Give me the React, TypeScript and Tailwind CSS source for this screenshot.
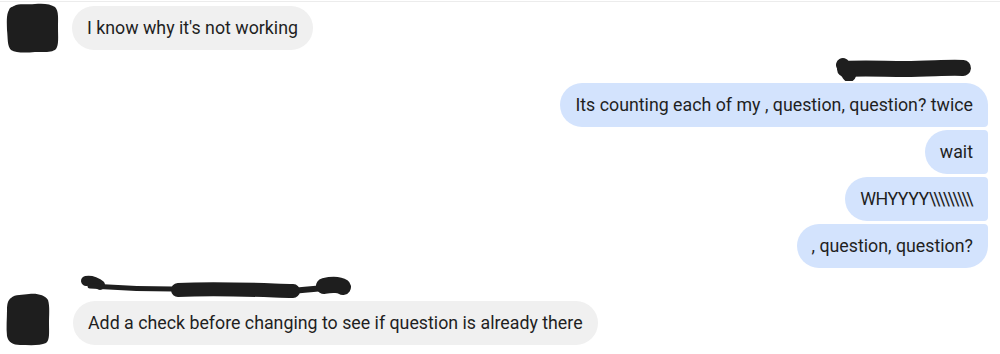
import React from "react";

const ink = "#1e1e1e";

const Bubble = ({ children, side, shape }: { children: React.ReactNode; side: "in" | "out"; shape: string }) => {
  const color = side === "in" ? "bg-[#f0f0f0]" : "bg-[#d3e3fd]";
  return (
    <div className={`h-[44px] flex items-center px-[15px] text-[17.8px] text-[#1f1f1f] whitespace-nowrap ${color} ${shape}`}>
      {children}
    </div>
  );
};

const AvatarTop = () => (
  <svg width="54" height="50" viewBox="0 0 54 50" className="shrink-0">
    <path
      d="M9,3 C14,0 22,2 30,1 C38,0 46,1 50,4 C54,8 53,16 53,25 C53,34 54,42 51,46 C47,50 38,49 30,49 C20,50 11,50 6,47 C2,43 3,35 2,27 C2,20 1,12 4,7 C5,4 7,4 9,3 Z"
      fill={ink}
    />
  </svg>
);

const AvatarBottom = () => (
  <svg width="46" height="54" viewBox="0 0 46 54" className="shrink-0">
    <path
      d="M6,6 C10,2 18,3 24,2 C32,1 40,3 43,8 C45,14 44,24 44,32 C44,40 45,48 41,51 C35,54 24,53 15,53 C8,53 3,50 2,44 C1,36 2,26 2,18 C2,12 3,8 6,6 Z"
      fill={ink}
    />
  </svg>
);

const NameTop = () => (
  <svg width="138" height="24" viewBox="0 0 138 24" className="self-end mr-[27px] mt-[4px]">
    <path d="M10,12 C30,11 50,12 70,12 C95,12 115,10 128,11" stroke={ink} strokeWidth="16" strokeLinecap="round" fill="none" />
    <path d="M8,8 L14,18" stroke={ink} strokeWidth="14" strokeLinecap="round" />
  </svg>
);

const NameBottom = () => (
  <svg width="276" height="26" viewBox="0 0 276 26" className="ml-[5px]">
    <path d="M8,7 C14,6 20,9 22,11" stroke={ink} strokeWidth="10" strokeLinecap="round" fill="none" />
    <path d="M12,12 C40,14 70,15 95,15" stroke={ink} strokeWidth="5" strokeLinecap="round" fill="none" />
    <path d="M100,16 C140,14 180,16 215,17" stroke={ink} strokeWidth="14" strokeLinecap="round" fill="none" />
    <path d="M212,17 C225,16 235,15 245,14" stroke={ink} strokeWidth="6" strokeLinecap="round" fill="none" />
    <path d="M246,12 C255,10 262,11 265,13" stroke={ink} strokeWidth="16" strokeLinecap="round" fill="none" />
  </svg>
);

const App = () => {
  return (
    <div className="w-[1000px] h-[354px] bg-white overflow-hidden flex flex-col font-['Roboto','Liberation_Sans',sans-serif]">
      <div className="h-[1px] mt-[1px] bg-[#ececec]"></div>

      {/* first incoming */}
      <div className="flex items-start mt-[1px] pl-[5px]">
        <AvatarTop />
        <div className="ml-[13px] mt-[3px]">
          <Bubble side="in" shape="rounded-[22px]">I know why it's not working</Bubble>
        </div>
      </div>

      <NameTop />

      {/* outgoing group */}
      <div className="flex flex-col items-end gap-[3px] pr-[12px] mt-[2px]">
        <Bubble side="out" shape="rounded-l-[22px] rounded-tr-[22px] rounded-br-[4px]">
          Its counting each of my , question, question? twice
        </Bubble>
        <Bubble side="out" shape="rounded-l-[22px] rounded-r-[4px]">wait</Bubble>
        <Bubble side="out" shape="rounded-l-[22px] rounded-r-[4px]">
          <span className="tracking-[-0.5px]">WHYYYY</span>
          <span className="tracking-[-2.6px] pr-[2px]">{"\\\\\\\\\\\\\\\\\\"}</span>
        </Bubble>
        <Bubble side="out" shape="rounded-l-[22px] rounded-tr-[4px] rounded-br-[22px]">, question, question?</Bubble>
      </div>

      {/* last incoming */}
      <div className="flex items-start mt-[6px] pl-[5px]">
        <div className="mt-[18px]">
          <AvatarBottom />
        </div>
        <div className="flex flex-col ml-[22px]">
          <NameBottom />
          <div className="mt-[1px]">
            <Bubble side="in" shape="rounded-[22px]">Add a check before changing to see if question is already there</Bubble>
          </div>
        </div>
      </div>
    </div>
  );
};

export default App;
